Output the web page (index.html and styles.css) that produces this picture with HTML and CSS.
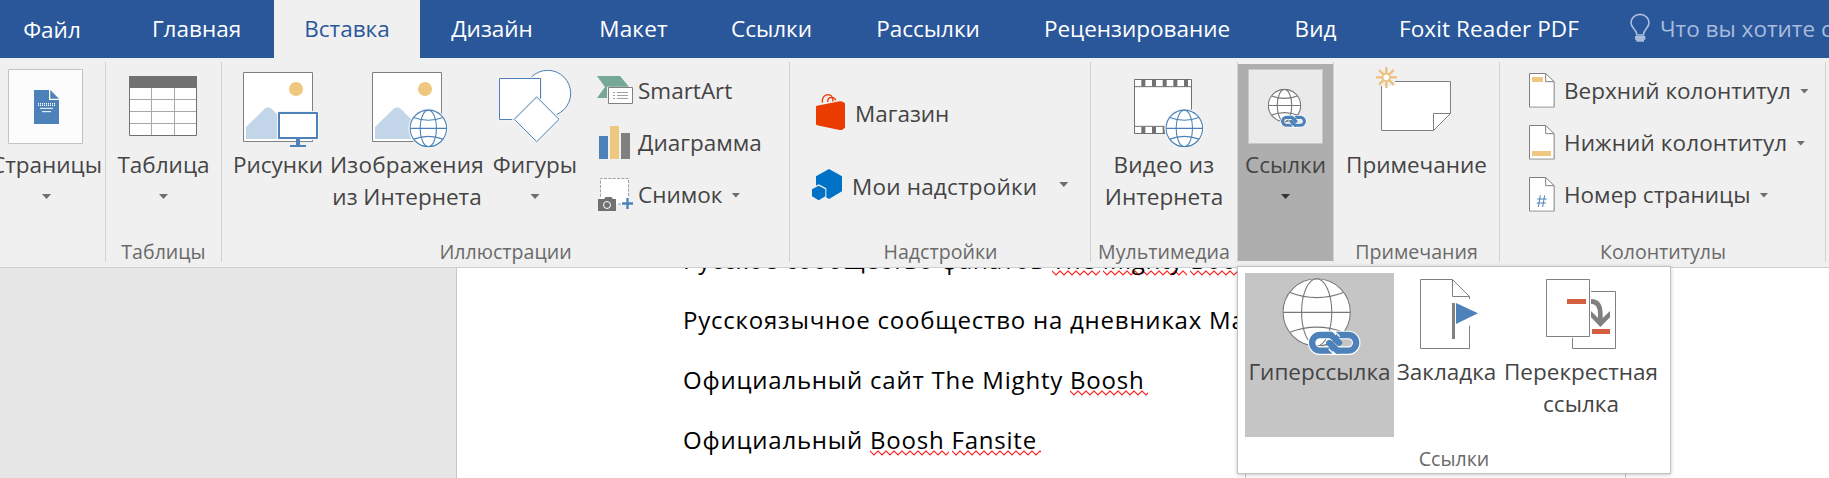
FILE: index.html
```html
<!DOCTYPE html>
<html lang="ru">
<head>
<meta charset="utf-8">
<title>Word</title>
<link rel="stylesheet" href="styles.css">
</head>
<body>
<svg class="defs" width="0" height="0">
  <symbol id="globe" viewBox="-51 -51 102 102">
    <circle r="49.5" fill="#fff"/>
    <g fill="none" stroke="currentColor" class="hair">
      <circle r="49"/><ellipse rx="22" ry="49"/>
      <path d="M-49 0H49M-39-29Q0-14 39-29M-39 29Q0 14 39 29"/>
    </g>
  </symbol>
  <symbol id="chain" viewBox="255 218 175 91">
    <g fill="none" stroke-linecap="round">
      <path d="M300 240H385A23.500 23.500 0 0 1 385 287H300A23.500 23.500 0 0 1 300 240Z" class="halo" stroke-width="26"/>
      <g stroke="#4c82b9" stroke-width="19">
        <path stroke-linecap="butt" d="M338 287H300A23.500 23.500 0 0 1 300 240H335"/>
        <path stroke-linecap="butt" d="M348 240H385A23.500 23.500 0 0 1 385 287H350"/>
        <path d="M333 240L357 263M352 287L328 264"/>
      </g>
      <path d="M343 229L358 244M327 283L342 298" class="halo" stroke-width="4"/>
    </g>
  </symbol>
  <symbol id="page" viewBox="0 0 78 104">
    <path d="M1.500 1.500H50L75.500 26V102.500H1.500Z" fill="#fff" stroke="#808080" stroke-width="3"/>
    <path d="M50 2V26H75" fill="none" stroke="#808080" stroke-width="3"/>
  </symbol>
</svg>

<nav class="tabs">
  <span class="tab file">Файл</span>
  <span class="tab home">Главная</span>
  <span class="tab insert active">Вставка</span>
  <span class="tab design">Дизайн</span>
  <span class="tab layout">Макет</span>
  <span class="tab refs">Ссылки</span>
  <span class="tab mail">Рассылки</span>
  <span class="tab review">Рецензирование</span>
  <span class="tab view">Вид</span>
  <span class="tab foxit">Foxit Reader PDF</span>
  <span class="tell">
    <svg width="20" height="30" viewBox="390 40 60 90"><g fill="none" stroke="#a9bcdc" stroke-width="5"><path d="M411 106C411 90 393 86 393 69A27 25 0 0 1 447 69C447 86 430 90 430 106Z"/></g><path d="M405 109h31v11h-4v6h-23v-6h-4z" fill="#a9bcdc"/></svg>
    <span>Что вы хотите сделать?</span>
  </span>
</nav>

<section class="ribbon">
  <div class="group g-pages">
    <div class="items">
      <div class="big"><svg class="icon" viewBox="0 174 279 273"><path d="M25.500 208.500h222v222h-222z" fill="#fcfcfc" stroke="#c3c3c3" stroke-width="3"/><path d="M102 270h45v30h30v72h-75z" fill="#4c82b9"/><path d="M151 270l26 26h-26z" fill="#4c82b9"/><path d="M114 311h51M114 316h51" stroke="#fff" stroke-width="4" stroke-dasharray="3 3"/><path d="M120 325h39M126 335h27" stroke="#fff" stroke-width="3"/></svg>
        <span>Страницы</span><i class="arrow"></i></div>
    </div>
  </div>
  <div class="group g-tables">
    <div class="items">
      <div class="big"><svg class="icon" viewBox="318 174 345 273"><path d="M388.500 230h201v176h-201z" fill="#fff"/><path d="M454.500 262v144M523.500 262v144M390 298.500h198M390 334.500h198M390 370.500h198" stroke="#a8a8a8" stroke-width="3"/><path d="M388.500 230h201v176.500h-201z" fill="none" stroke="#717171" stroke-width="3"/><path d="M387 228h204v36h-204z" fill="#717171"/></svg>
        <span>Таблица</span><i class="arrow"></i></div>
    </div>
    <div class="caption">Таблицы</div>
  </div>
  <div class="group g-illus">
    <div class="items">
      <div class="big w100"><svg class="icon" viewBox="684 174 300 273"><path d="M730.500 217.500h207v207h-207z" fill="#fff" stroke="#808080" stroke-width="3"/><circle cx="888" cy="267" r="21" fill="#edc87e"/><path d="M738 417v-36l56-55q10-9 21 0l40 40v51z" fill="#c3d5e9"/><path d="M831 333h126v87h-126z" fill="#f6f6f6"/><path d="M837 339h114v75h-114z" fill="#fff" stroke="#4c82b9" stroke-width="6" stroke-linejoin="round"/><path d="M888 417h12v18h18v6h-48v-6h18z" fill="#4c82b9"/></svg>
        <span>Рисунки</span></div>
      <div class="big w158"><svg class="icon blue" viewBox="984 174 474 273"><path d="M1117.500 217.500h207v207h-207z" fill="#fff" stroke="#808080" stroke-width="3"/><circle cx="1275" cy="267" r="21" fill="#edc87e"/><path d="M1125 417v-36l56-55q10-9 21 0l45 45v46z" fill="#c3d5e9"/><circle cx="1285" cy="385" r="60" fill="#f3f3f3"/><use href="#globe" x="1228" y="328" width="114" height="114"/></svg>
        <span class="wide">Изображения</span><span>из Интернета</span></div>
      <div class="big w98"><svg class="icon" viewBox="138 174 294 273"><g fill="#fff" stroke="#4c82b9" stroke-width="3"><circle cx="323" cy="280" r="69"/><path d="M174 231h133v132h-133z" stroke="none" fill="#f3f3f3"/><path d="M178.500 235.500h123v123h-123z"/><path d="M290 284l74 74-74 74-74-74z" stroke="none" fill="#f3f3f3"/><path d="M290 291l67 67-67 67-67-67z"/></g></svg>
        <span>Фигуры</span><i class="arrow"></i></div>
      <div class="stack">
        <div class="row"><svg width="36" height="52" viewBox="471 195 108 156"><path d="M471 228h69l27 32h-66v34h-30l24-33z" fill="#76a797"/><path d="M505.500 262.500h72v48h-72z" fill="#fff" stroke="#808080" stroke-width="3"/><path d="M519 277.500h6M519 286.500h6M519 295.500h6M531 277.500h33M531 286.500h33M531 295.500h33" stroke="#a0a0a0" stroke-width="3"/></svg><span>SmartArt</span></div>
        <div class="row"><svg width="36" height="52" viewBox="471 351 108 156"><path d="M477 408h27v69h-27z" fill="#4c82b9"/><path d="M510 378h27v99h-27z" fill="#edc87e"/><path d="M543 399h27v78h-27z" fill="#808080"/></svg><span>Диаграмма</span></div>
        <div class="row"><svg width="36" height="52" viewBox="471 507 108 156"><path d="M481.500 535.500h84v78h-84z" fill="#fff"/><path d="M481.500 590v-54.500h84v56M534 612h9" fill="none" stroke="#a0a0a0" stroke-width="3" stroke-dasharray="9 4"/><path d="M474 597h18l5-6h17l5 6h9v36h-54z" fill="#717171"/><circle cx="501" cy="615" r="10.500" fill="none" stroke="#fff" stroke-width="3"/><path d="M546 610.500h33M562.500 594v33" stroke="#4c82b9" stroke-width="7"/></svg><span>Снимок</span><i class="arrow"></i></div>
      </div>
    </div>
    <div class="caption">Иллюстрации</div>
  </div>
  <div class="group g-addins">
    <div class="items">
      <div class="stack tall">
        <div class="row"><svg width="36" height="73" viewBox="96 231 108 219"><path d="M108 320q0-3 3-3l68-13q6-1 10 2l6 4v73l-8 6q-4 2-8 1l-68-14q-3-1-3-4z" fill="#eb3c00"/><path d="M127 308c-2-16 7-24 19-24 9 0 12 6 13 20M143 306c0-10 6-14 12-14 8 0 11 4 12 9" fill="none" stroke="#eb3c00" stroke-width="4"/></svg><span>Магазин</span></div>
        <div class="row mine"><svg width="36" height="73" viewBox="96 450 108 219"><path d="M147 507l39 22v45l-39 23-39-23v-45z" fill="#0072c6"/><path d="M116 553l23 12v26l-23 13-23-13v-26z" fill="#f0f0f0"/><path d="M116 557l20 11v21l-20 12-20-12v-21z" fill="#0072c6"/></svg><span>Мои надстройки</span><i class="arrow"></i></div>
      </div>
    </div>
    <div class="caption">Надстройки</div>
  </div>
  <div class="group g-media">
    <div class="items">
      <div class="big"><svg class="icon blue" viewBox="933 174 438 273"><path d="M1063.500 238.500h171v162h-171z" fill="#fff" stroke="#717171" stroke-width="3"/><path d="M1065 260h169M1065 379h169" stroke="#717171" stroke-width="3"/><path d="M1084 249.500h150M1084 390.500h150" stroke="#717171" stroke-width="20" stroke-dasharray="12 20"/><circle cx="1213" cy="385" r="60" fill="#f3f3f3"/><use href="#globe" x="1156" y="328" width="114" height="114"/></svg>
        <span class="wide">Видео из</span><span>Интернета</span></div>
    </div>
    <div class="caption">Мультимедиа</div>
  </div>
  <div class="group g-links">
    <div class="items">
      <div class="big pressed"><svg class="icon gray tile" viewBox="114 174 285 273"><path d="M145.500 208.500h222v222h-222z" fill="#eaeaea" stroke="#c8c8c8" stroke-width="3"/><use href="#globe" x="203" y="266" width="101" height="101"/><use href="#chain" x="237" y="341" width="87" height="46"/></svg>
        <span>Ссылки</span><i class="arrow"></i></div>
    </div>
  </div>
  <div class="group g-notes">
    <div class="items">
      <div class="big"><svg class="icon" viewBox="402 174 495 273"><path d="M544.500 244.500h207v96l-51 51h-156z" fill="#fff" stroke="#808080" stroke-width="3"/><path d="M700.500 391v-50.500h51" fill="none" stroke="#808080" stroke-width="3"/><path d="M522 198h63v60h-63z" fill="#f0f0f0"/><g fill="none" stroke="#ebc07a" stroke-width="7"><path d="M559 201v20M559 243v21M528 232h20M570 232h21M537 210l14 14M567 240l14 14M581 210l-14 14M551 240l-14 14"/><circle cx="559" cy="232" r="11" stroke-width="5" fill="#fff"/></g></svg>
        <span>Примечание</span></div>
    </div>
    <div class="caption">Примечания</div>
  </div>
  <div class="group g-headers">
    <div class="items">
      <div class="stack">
        <div class="row"><svg width="26" height="52" viewBox="87 195 78 156"><use href="#page" x="87" y="219" width="78" height="104"/><path d="M96 231h33v15h-33z" fill="#edc87e"/></svg><span>Верхний колонтитул</span><i class="arrow"></i></div>
        <div class="row"><svg width="26" height="52" viewBox="87 351 78 156"><use href="#page" x="87" y="375" width="78" height="104"/><path d="M96 453h57v15h-57z" fill="#edc87e"/></svg><span class="wide2">Нижний колонтитул</span><i class="arrow"></i></div>
        <div class="row"><svg width="26" height="52" viewBox="87 507 78 156"><use href="#page" x="87" y="531" width="78" height="104"/><path d="M121 586l-6 35M134 586l-6 35M112 597h28M110 609h28" stroke="#4c82b9" stroke-width="3"/></svg><span>Номер страницы</span><i class="arrow"></i></div>
      </div>
    </div>
    <div class="caption">Колонтитулы</div>
  </div>
</section>

<main class="workspace">
  <article class="sheet">
    <p>Русское сообщество фанатов <u>The</u> <u>Mighty</u> <u>Boosh</u></p>
    <p>Русскоязычное сообщество на дневниках Mail</p>
    <p>Официальный сайт The Mighty <u>Boosh</u></p>
    <p>Официальный <u>Boosh</u> <u>Fansite</u></p>
  </article>
</main>

<div class="under"></div>
<div class="popup">
  <div class="choices">
    <div class="choice w149 selected"><svg class="icon gray" viewBox="75 54 447 249"><use href="#globe" x="185" y="67" width="210" height="210"/><use href="#chain" x="255" y="218" width="175" height="91"/></svg><span>Гиперссылка</span></div>
    <div class="choice w105"><svg class="icon" viewBox="522 54 315 249"><path d="M601.500 73.500h96l51 51v156h-147z" fill="#fff" stroke="#808080" stroke-width="3"/><path d="M697.500 74v50.500h51" fill="none" stroke="#808080" stroke-width="3"/><path d="M744 132h8v80h-8z" fill="#fff"/><path d="M696 144h9v108h-9z" fill="#808080"/><path d="M708 144l66 31-66 32z" fill="#4c82b9"/></svg><span>Закладка</span></div>
    <div class="choice w164"><svg class="icon" viewBox="837 54 492 249"><path d="M1057.500 109.500h129v171h-129z" fill="#fff" stroke="#808080" stroke-width="3"/><path d="M976 70h137v179h-137z" fill="#fff"/><path d="M979.500 73.500h129v171h-129z" fill="#fff" stroke="#808080" stroke-width="3"/><path d="M1041 132h57v15h-57zM1116 222h54v15h-54z" fill="#d35f40"/><path d="M1113 139c20 0 28 14 28 38v26" fill="none" stroke="#808080" stroke-width="14"/><path d="M1113 168l28 28 29-28v19l-29 29-28-29z" fill="#808080"/></svg><span>Перекрестная</span><span>ссылка</span></div>
  </div>
  <div class="caption">Ссылки</div>
</div>
</body>
</html>
```
FILE: styles.css
```css
* { box-sizing: border-box; }
body {
  margin: 0;
  width: 1829px;
  height: 478px;
  overflow: hidden;
  position: relative;
  display: flex;
  flex-direction: column;
  background: #e6e6e6;
  color: #444;
  font-family: "Open Sans", "Noto Sans", sans-serif;
  font-size: 22.5px;
  white-space: nowrap;
}
.defs { position: absolute; }
svg { display: block; flex: none; }
.hair * { vector-effect: non-scaling-stroke; stroke-width: 1.1px; }
.halo { stroke: #fff; }
.tile .halo { stroke: #eaeaea; }
.selected .halo { stroke: #c5c5c5; }
.blue { color: #4c82b9; }
.gray { color: #777; }

/* Tab strip */
.tabs { display: flex; flex: none; height: 58px; background: #2a579a; color: #fff; line-height: 57px; }
.tab { flex: none; text-align: center; }
.file { width: 104px; margin-right: 15px; padding-top: 1px; }
.home { width: 155px; }
.insert { width: 146px; }
.design { width: 144px; }
.layout { width: 139px; letter-spacing: .2px; }
.refs { width: 137px; }
.mail { width: 176px; }
.review { width: 242px; }
.view { width: 115px; }
.foxit { width: 232px; letter-spacing: .1px; }
.active { background: #f0f0f0; color: #2a579a; }
.tell { display: flex; gap: 10px; padding-left: 25px; color: #a9bcdc; }
.tell svg { margin-top: 13px; }

/* Ribbon */
.ribbon { display: flex; flex: none; height: 210px; background: #f0f0f0; border-bottom: 1px solid #cfcfcf; }
.group {
  flex: none;
  display: flex;
  flex-direction: column;
  background: linear-gradient(#d2d2d2, #d2d2d2) right 4px / 1px 200px no-repeat;
}
.group { background-position: right 4px; }
.items { display: flex; height: 180px; flex: none; }
.caption { height: 28px; line-height: 28px; font-size: 19.6px; text-align: center; color: #6a6a6a; }
.g-pages { width: 106px; }
.g-pages .big { width: 93px; }
.g-tables { width: 116px; padding-right: 1px; }
.g-illus { width: 568px; }
.g-illus .items { padding-left: 6px; }
.g-addins { width: 301px; }
.g-media { width: 147px; padding-right: 1px; }
.g-links { width: 96px; padding-right: 1px; }
.g-notes { width: 166px; padding-right: 1px; }
.g-headers { width: 326px; }
.g-illus .caption { padding-right: 1px; }

.big, .choice { display: flex; flex-direction: column; align-items: center; width: 100%; line-height: 32px; }
.big .icon { width: 100%; height: 91px; }
.w100 { width: 100px; }
.w158 { width: 158px; }
.w98 { width: 98px; }
.wide { letter-spacing: .25px; }
.wide2 { letter-spacing: .1px; }
.pressed { height: 203px; background: linear-gradient(#aeaeae, #aeaeae) 0 6px / 100% 197px no-repeat; }
.arrow { flex: none; width: 9px; height: 5px; background: #6e6e6e; clip-path: polygon(0 0, 100% 0, 50% 100%); }
.big .arrow { margin-top: 13px; }
.pressed .arrow { background: #333; }

.stack { padding: 7px 0 0 13px; }
.row { display: flex; align-items: center; height: 52px; line-height: 52px; gap: 5px; }
.row .arrow { margin-left: 4px; }
.g-headers .stack { padding-left: 29px; }
.g-headers .row { gap: 9px; }
.g-headers .arrow { margin-left: 0; }
.tall { padding: 19px 0 0 22px; }
.tall .row { height: 73px; line-height: 73px; gap: 7px; }
.tall .mine { gap: 4px; letter-spacing: .2px; }
.tall .mine .arrow { margin: -4px 0 0 18px; }

/* Document */
.workspace { flex: 1; min-height: 0; padding-left: 456px; overflow: hidden; }
.sheet { height: 210px; padding-left: 226px; background: #fff; border-left: 1px solid #c6c6c6; color: #000; font-size: 24px; letter-spacing: .78px; overflow: hidden; }
.sheet p { margin: 0; height: 60px; line-height: 60px; }
.sheet p:first-child { margin-top: -38px; }
.sheet u {
  display: inline-block;
  height: 60px;
  vertical-align: top;
  padding-right: 4px;
  margin-right: -4px;
  text-decoration: none;
  background: url("data:image/svg+xml,%3Csvg xmlns='http://www.w3.org/2000/svg' width='8' height='6'%3E%3Cpath d='M-1 0L0 1L4 5L8 1L9 0' fill='none' stroke='%23f22' stroke-width='1.1'/%3E%3C/svg%3E") 0 40px repeat-x;
}

/* Links drop-down */
.popup { position: absolute; left: 1237px; top: 266px; width: 434px; height: 208px; padding: 6px 7px; background: #fff; border: 1px solid #c2c2c2; box-shadow: 0 1px 4px rgba(0,0,0,.22); }
.under { position: absolute; left: 1245px; top: 472px; width: 381px; height: 10px; background: #fff; border: 1px solid #c6c6c6; }
.choices { display: flex; height: 172px; }
.choice { flex: none; height: 164px; }
.choice .icon { width: 100%; height: 83px; }
.w149 { width: 149px; }
.w105 { width: 105px; }
.w164 { width: 164px; }
.selected { background: #c5c5c5; }
```
